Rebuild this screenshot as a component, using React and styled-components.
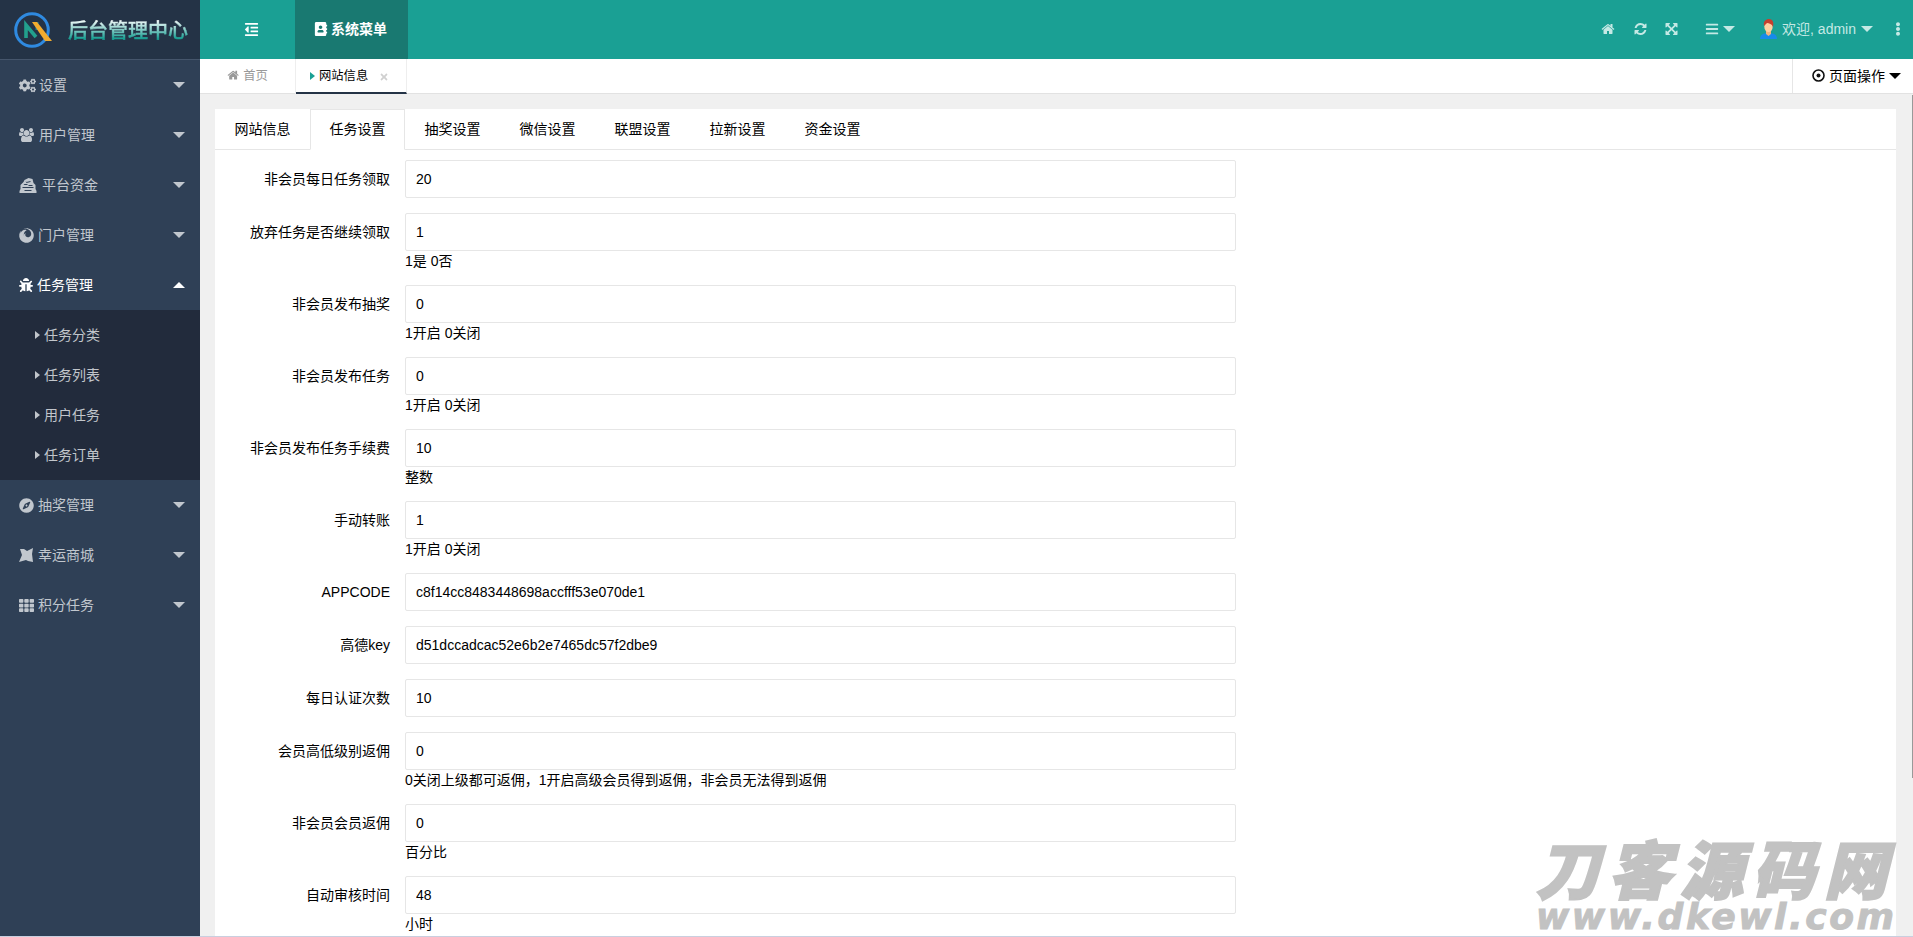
import React from "react";
import styled, { createGlobalStyle, css } from "styled-components";
import {
  FaCogs, FaFirefox, FaBug, FaCompass, FaTh, FaBars,
  FaEllipsisV, FaOutdent, FaAddressBook, FaTimes,
} from "react-icons/fa";

const Global = createGlobalStyle`
  * { box-sizing: border-box; }
  body { margin: 0; overflow: hidden; background: #f0f0f0; }
  body, input { font: 14px/24px "Liberation Sans", "Noto Sans CJK SC", sans-serif; color: #000; }
`;

const Shell = styled.div`
  display: flex;
  height: 937px;
  overflow: hidden;
  position: relative;
  border-bottom: 1px solid #c9cfdf;
`;
const Sidebar = styled.aside`
  width: 200px;
  flex: none;
  background: #2f4056;
`;
const Brand = styled.div`
  height: 60px;
  display: flex;
  align-items: center;
  padding: 0 0 0 12px;
  gap: 15px;
  background: #243346;
  border-bottom: 1px solid #45556b;
`;
const BrandName = styled.h1`
  margin: 0;
  padding-top: 2px;
  font: 500 20px/28px "Liberation Sans", "Noto Sans CJK SC", sans-serif;
  white-space: nowrap;
  background: linear-gradient(#ffffff 15%, #1aa094 78%);
  background-clip: text;
  color: transparent;
  -webkit-text-stroke: 0.4px transparent;
`;
const MenuItem = styled.div`
  height: 50px;
  display: flex;
  align-items: center;
  padding: 0 15px 0 19px;
  color: ${(p) => (p.$open ? "#fff" : "#c1c7ce")};
`;
const MenuIcon = styled.span`
  display: flex;
  width: ${(p) => p.$w}px;
  flex: none;
  font-size: ${(p) => p.$size || 15}px;
`;
const MenuText = styled.span`
  flex: 1;
`;
const SubMenu = styled.div`
  padding: 5px 0;
  background: #222b3c;
`;
const SubItem = styled.div`
  height: 40px;
  display: flex;
  align-items: center;
  gap: 4px;
  padding-left: 35px;
  color: #c1c5cb;
`;
const Triangle = styled.i`
  width: 0;
  height: 0;
  flex: none;
  ${(p) => p.$dir === "down" && css`border: 6px solid transparent; border-top-color: currentColor; border-bottom-width: 0;`}
  ${(p) => p.$dir === "up" && css`border: 6px solid transparent; border-bottom-color: currentColor; border-top-width: 0;`}
  ${(p) => p.$dir === "right" && css`border: 4px solid transparent; border-left: 5px solid currentColor; border-right-width: 0;`}
`;

const Main = styled.div`
  flex: 1;
  min-width: 0;
  display: flex;
  flex-direction: column;
`;
const TopBar = styled.header`
  height: 59px;
  flex: none;
  display: flex;
  align-items: center;
  background: #1aa094;
  color: #fff;
`;
const Collapse = styled.div`
  width: 95px;
  display: flex;
  justify-content: center;
  padding-left: 7px;
  font-size: 15px;
`;
const TopMenu = styled.div`
  width: 113px;
  height: 59px;
  display: flex;
  align-items: center;
  padding: 0 0 1px 19px;
  gap: 3px;
  background: #197971;
  font-weight: 700;
`;
const Tools = styled.div`
  margin-left: auto;
  display: flex;
  align-items: center;
  padding-bottom: 1px;
  color: #c5e9e5;
`;
const Tool = styled.span`
  display: flex;
  align-items: center;
  gap: ${(p) => p.$gap || 0}px;
  margin-right: ${(p) => p.$after}px;
  font-size: 14px;
  white-space: nowrap;
`;
const PageTabs = styled.nav`
  height: 35px;
  flex: none;
  display: flex;
  background: #fff;
  border-bottom: 1px solid #e2e2e2;
`;
const PageTab = styled.div`
  width: ${(p) => p.$w}px;
  height: 35px;
  display: flex;
  align-items: center;
  padding: 0 0 2px ${(p) => p.$pad}px;
  gap: 4px;
  font-size: 12.3px;
  color: ${(p) => (p.$active ? "#000" : "#999")};
  border-right: 1px solid #eee;
  ${(p) => p.$active && css`border-bottom: 2px solid #243346; padding-bottom: 0;`}
`;
const CloseMark = styled.span`
  display: flex;
  margin: 2px 0 0 7px;
  color: #d0d0d0;
  font-size: 10px;
`;
const TabCaret = styled.span`
  display: flex;
  color: #1aa094;
`;
const PageActions = styled.div`
  width: 121px;
  margin-left: auto;
  display: flex;
  align-items: center;
  gap: 4px;
  padding: 0 0 1px 19px;
  border-left: 1px solid #e6e6e6;
  white-space: nowrap;
`;
const Content = styled.main`
  flex: 1;
  padding: 15px 17px 0 15px;
  min-height: 0;
  position: relative;
`;
const ScrollThumb = styled.div`
  position: absolute;
  right: 0;
  top: 1px;
  width: 1px;
  height: 683px;
  background: #999;
`;
const Card = styled.section`
  height: 100%;
  background: #fff;
  overflow: hidden;
`;
const SettingTabs = styled.div`
  display: flex;
  height: 41px;
  border-bottom: 1px solid #e6e6e6;
`;
const SettingTab = styled.div`
  width: 95px;
  height: 41px;
  flex: none;
  text-align: center;
  line-height: 39px;
  border: 1px solid transparent;
  ${(p) => p.$active && css`background: #fff; border-color: #e6e6e6; border-bottom-color: #fff;`}
`;
const Form = styled.form`
  padding-top: 10px;
`;
const Field = styled.div`
  display: grid;
  grid-template-columns: 175px 831px;
  column-gap: 15px;
  margin-bottom: 15px;
`;
const Label = styled.label`
  text-align: right;
  line-height: 38px;
`;
const Input = styled.input`
  width: 100%;
  height: 38px;
  display: block;
  padding: 0 0 0 10px;
  border: 1px solid #e6e6e6;
  border-radius: 2px;
  background: #fff;
  outline: none;
`;
const Hint = styled.div`
  grid-column: 2;
  height: 19px;
  line-height: 20px;
`;
const Watermark = styled.div`
  position: absolute;
  left: 1536px;
  bottom: 2px;
  width: 358px;
  color: #c2c2c2;
  white-space: nowrap;
`;
const MarkTitle = styled.div`
  font: italic 900 63px/66px "Noto Sans CJK SC", sans-serif;
  letter-spacing: 9px;
  -webkit-text-stroke: 2px #c2c2c2;
`;
const MarkUrl = styled.div`
  font: italic 700 36px/34px "DejaVu Sans", sans-serif;
  -webkit-text-stroke: 1px #c2c2c2;
  letter-spacing: 2.6px;
`;
const Glyph = styled.svg`
  height: 1em;
  width: auto;
  flex: none;
  fill: currentColor;
`;

const HomeIcon = () => (
  <Glyph viewBox="0 0 1792 1792">
    <path d="M1472 992v480q0 26-19 45t-45 19h-384v-384h-256v384h-384q-26 0-45-19t-19-45v-480q0-1 .5-3t.5-3l575-474 575 474q1 2 1 6zm223-69l-62 74q-8 9-21 11h-3q-13 0-21-7l-692-577-692 577q-12 8-24 7-13-2-21-11l-62-74q-8-10-7-23.500t11-21.500l719-599q32-26 76-26t76 26l244 204v-195q0-14 9-23t23-9h192q14 0 23 9t9 23v408l219 182q10 8 11 21.500t-7 23.500z" />
  </Glyph>
);
const RefreshIcon = () => (
  <Glyph viewBox="64 0 1700 1792">
    <path d="M1639 1056q0 5-1 7-64 268-268 434.500t-478 166.500q-146 0-282.500-55t-243.500-157l-129 129q-19 19-45 19t-45-19-19-45v-448q0-26 19-45t45-19h448q26 0 45 19t19 45-19 45l-137 137q71 66 161 102t187 36q134 0 250-65t186-179q11-17 53-117 8-23 30-23h192q13 0 22.500 9.500t9.500 22.500zm25-800v448q0 26-19 45t-45 19h-448q-26 0-45-19t-19-45 19-45l138-138q-148-137-349-137-134 0-250 65t-186 179q-11 17-53 117-8 23-30 23h-199q-13 0-22.500-9.500t-9.500-22.500v-7q65-268 270-434.500t480-166.500q146 0 284 55.500t245 156.500l130-129q19-19 45-19t45 19 19 45z" />
  </Glyph>
);
const ExpandIcon = () => (
  <Glyph viewBox="64 0 1700 1792">
    <path d="M1411 541l-355 355 355 355 144-144q29-31 70-14 39 17 39 59v448q0 26-19 45t-45 19h-448q-42 0-59-40-17-39 14-69l144-144-355-355-355 355 144 144q31 30 14 69-17 40-59 40h-448q-26 0-45-19t-19-45v-448q0-42 40-59 39-17 69 14l144 144 355-355-355-355-144 144q-19 19-45 19-12 0-24-5-40-17-40-59v-448q0-26 19-45t45-19h448q42 0 59 40 17 39-14 69l-144 144 355 355 355-355-144-144q-31-30-14-69 17-40 59-40h448q26 0 45 19t19 45v448q0 42-39 59-13 5-25 5-26 0-45-19z" />
  </Glyph>
);
const UsersIcon = () => (
  <Glyph viewBox="0 0 1920 1792">
    <path d="M593 896q-162 5-265 128h-134q-82 0-138-40.500t-56-118.500q0-353 124-353 6 0 43.500 21t97.500 42.500 119 21.500q67 0 133-23-5 37-5 66 0 139 81 256zm1071 637q0 120-73 189.500t-194 69.500h-874q-121 0-194-69.500t-73-189.500q0-53 3.500-103.500t14-109 26.500-108.500 43-97.500 62-81 85.500-53.500 111.500-20q10 0 43 21.500t73 48 107 48 135 21.500 135-21.500 107-48 73-48 43-21.500q61 0 111.500 20t85.500 53.500 62 81 43 97.500 26.500 108.500 14 109 3.500 103.500zm-1024-1277q0 106-75 181t-181 75-181-75-75-181 75-181 181-75 181 75 75 181zm704 384q0 159-112.500 271.500t-271.500 112.500-271.500-112.500-112.500-271.500 112.500-271.500 271.500-112.500 271.500 112.500 112.500 271.500zm576 225q0 78-56 118.500t-138 40.500h-134q-103-123-265-128 81-117 81-256 0-29-5-66 66 23 133 23 59 0 119-21.500t97.500-42.500 43.500-21q124 0 124 353zm-128-609q0 106-75 181t-181 75-181-75-75-181 75-181 181-75 181 75 75 181z" />
  </Glyph>
);
const Logo = () => (
  <svg width="41" height="38" viewBox="0 0 41 38" fill="none">
    <circle cx="20" cy="19" r="16.300" stroke="#2f8ae0" strokeWidth="3" />
    <path d="M14 27V14l10 12" stroke="#22a08d" strokeWidth="3.600" />
    <path d="M25 11v8" stroke="#1f7f94" strokeWidth="3" />
    <path d="M20 11h5l15 19h-7z" fill="#f2ac2e" />
  </svg>
);
const Avatar = () => (
  <svg width="17" height="20" viewBox="0 0 17 20">
    <path d="M0 20c0-4 3-6 8.500-6s8.500 2 8.500 6z" fill="#178bea" />
    <path d="M6 11h5v4l-2.500 2L6 15z" fill="#efb57f" />
    <ellipse cx="8.500" cy="7.500" rx="4.200" ry="5.500" fill="#ffd0a0" />
    <path d="M4 7c-1-5 2-7 5-7 4 0 5 4 4 8-1-3-4-4-6-4z" fill="#c5402f" />
  </svg>
);
const Target = () => (
  <svg width="13" height="13" viewBox="0 0 13 13" fill="none">
    <circle cx="6.500" cy="6.500" r="5.500" stroke="#111" strokeWidth="1.600" />
    <circle cx="6.500" cy="6.500" r="2" fill="#111" />
  </svg>
);
const House = () => (
  <svg width="18" height="15" viewBox="0 0 17 15" fill="currentColor" fillRule="evenodd">
    <path d="M5 2l4-2 4 1 1 4 2 2v4l1 2v2H0v-2l1-2V7l3-3zM6 3l1 1 4-1v1l-4 1zM4 7l1-1h3v1zm5 0h4v1H9zM3 9v1h11V9zm2 3v1h7v-1z" />
  </svg>
);
const Pinwheel = () => (
  <svg width="14" height="14" viewBox="0 0 14 14" fill="currentColor">
    <path d="M1 1h4l3 2 6-3-1 6 1 8-5-1-2-1-7 2 3-7z" />
  </svg>
);

const MENU = [
  ["设置", FaCogs, 20, 17],
  ["用户管理", UsersIcon, 20, 14],
  ["平台资金", House, 23],
  ["门户管理", FaFirefox, 19],
  ["任务管理", FaBug, 18, 14, ["任务分类", "任务列表", "用户任务", "任务订单"]],
  ["抽奖管理", FaCompass, 19],
  ["幸运商城", Pinwheel, 19],
  ["积分任务", FaTh, 19],
];
const SETTINGS = ["网站信息", "任务设置", "抽奖设置", "微信设置", "联盟设置", "拉新设置", "资金设置"];
const FIELDS = [
  ["非会员每日任务领取", "20"],
  ["放弃任务是否继续领取", "1", "1是 0否"],
  ["非会员发布抽奖", "0", "1开启 0关闭"],
  ["非会员发布任务", "0", "1开启 0关闭"],
  ["非会员发布任务手续费", "10", "整数"],
  ["手动转账", "1", "1开启 0关闭"],
  ["APPCODE", "c8f14cc8483448698accfff53e070de1"],
  ["高德key", "d51dccadcac52e6b2e7465dc57f2dbe9"],
  ["每日认证次数", "10"],
  ["会员高低级别返佣", "0", "0关闭上级都可返佣，1开启高级会员得到返佣，非会员无法得到返佣"],
  ["非会员会员返佣", "0", "百分比"],
  ["自动审核时间", "48", "小时"],
];

export default function App() {
  return (
    <Shell>
      <Global />
      <Sidebar>
        <Brand><Logo /><BrandName>后台管理中心</BrandName></Brand>
        {MENU.map(([name, Icon, w, size, children]) => (
          <React.Fragment key={name}>
            <MenuItem $open={!!children}>
              <MenuIcon $w={w} $size={size}><Icon /></MenuIcon>
              <MenuText>{name}</MenuText>
              <Triangle $dir={children ? "up" : "down"} />
            </MenuItem>
            {children && (
              <SubMenu>
                {children.map((c) => <SubItem key={c}><Triangle $dir="right" />{c}</SubItem>)}
              </SubMenu>
            )}
          </React.Fragment>
        ))}
      </Sidebar>
      <Main>
        <TopBar>
          <Collapse><FaOutdent /></Collapse>
          <TopMenu><FaAddressBook />系统菜单</TopMenu>
          <Tools>
            <Tool $after={19}><HomeIcon /></Tool>
            <Tool $after={18}><RefreshIcon /></Tool>
            <Tool $after={27}><ExpandIcon /></Tool>
            <Tool $gap={4} $after={25}><FaBars /><Triangle $dir="down" /></Tool>
            <Tool $gap={5} $after={18}><Avatar />欢迎, admin<Triangle $dir="down" /></Tool>
            <Tool $after={8}><FaEllipsisV /></Tool>
          </Tools>
        </TopBar>
        <PageTabs>
          <PageTab $w={96} $pad={27}><HomeIcon />首页</PageTab>
          <PageTab $w={111} $pad={14} $active>
            <TabCaret><Triangle $dir="right" /></TabCaret>网站信息<CloseMark><FaTimes /></CloseMark>
          </PageTab>
          <PageActions><Target />页面操作<Triangle $dir="down" /></PageActions>
        </PageTabs>
        <Content>
          <Card>
            <SettingTabs>
              {SETTINGS.map((s, i) => <SettingTab key={s} $active={i === 1}>{s}</SettingTab>)}
            </SettingTabs>
            <Form>
              {FIELDS.map(([label, value, hint]) => (
                <Field key={label}>
                  <Label>{label}</Label>
                  <Input defaultValue={value} />
                  {hint && <Hint>{hint}</Hint>}
                </Field>
              ))}
            </Form>
          </Card>
          <ScrollThumb />
        </Content>
      </Main>
      <Watermark>
        <MarkTitle>刀客源码网</MarkTitle>
        <MarkUrl>www.dkewl.com</MarkUrl>
      </Watermark>
    </Shell>
  );
}
